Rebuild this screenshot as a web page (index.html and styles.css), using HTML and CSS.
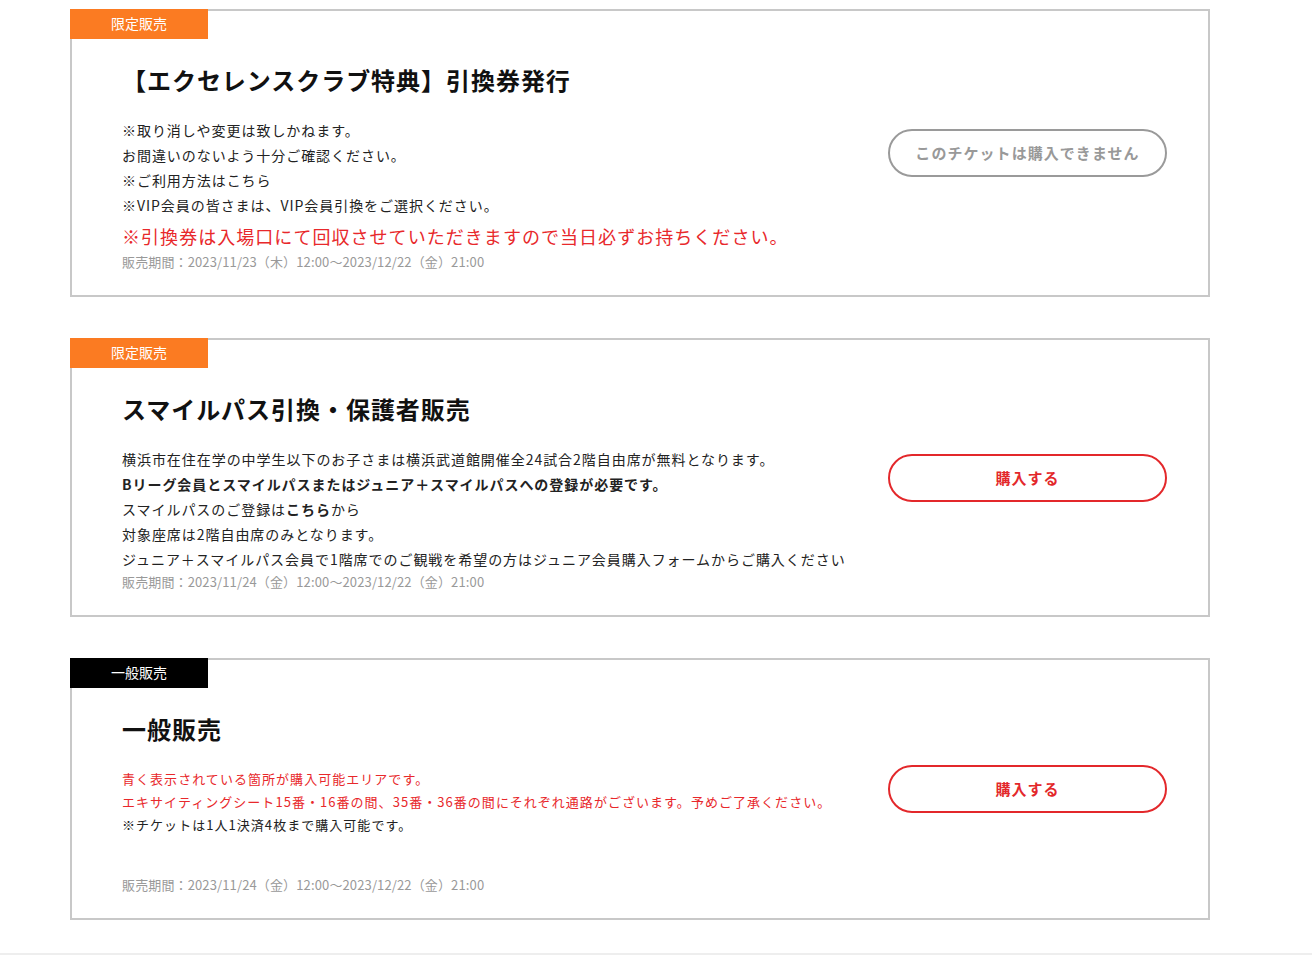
FILE: index.html
```html
<!DOCTYPE html>
<html lang="ja">
<head>
    <meta charset="UTF-8">
    <meta name="viewport" content="width=device-width, initial-scale=1.0">
    <title>チケット販売</title>
    <link rel="stylesheet" href="styles.css">
</head>

<body>
    <div class="ticket-list">
        <!-- 限定販売 -->
        <section class="ticket">
            <span class="ticket-badge badge-limited">限定販売</span>
            <div class="ticket-info">
                <h2 class="ticket-title">【エクセレンスクラブ特典】引換券発行</h2>
                <div class="ticket-note">
                    <p>※取り消しや変更は致しかねます。</p>
                    <p>お間違いのないよう十分ご確認ください。</p>
                    <p>※ご利用方法はこちら</p>
                    <p>※VIP会員の皆さまは、VIP会員引換をご選択ください。</p>
                    <p class="note-large">※引換券は入場口にて回収させていただきますので当日必ずお持ちください。</p>
                </div>
                <p class="ticket-period">販売期間：2023/11/23（木）12:00〜2023/12/22（金）21:00</p>
            </div>
            <div class="ticket-action">
                <a href="#" class="btn btn-disabled">このチケットは購入できません</a>
            </div>
        </section>

        <section class="ticket">
            <span class="ticket-badge badge-limited">限定販売</span>
            <div class="ticket-info">
                <h2 class="ticket-title">スマイルパス引換・保護者販売</h2>
                <div class="ticket-note">
                    <p>横浜市在住在学の中学生以下のお子さまは横浜武道館開催全24試合2階自由席が無料となります。</p>
                    <p><b>Bリーグ会員とスマイルパスまたはジュニア＋スマイルパスへの登録が必要です。</b></p>
                    <p>スマイルパスのご登録は<b>こちら</b>から</p>
                    <p>対象座席は2階自由席のみとなります。</p>
                    <p>ジュニア＋スマイルパス会員で1階席でのご観戦を希望の方はジュニア会員購入フォームからご購入ください</p>
                </div>
                <p class="ticket-period">販売期間：2023/11/24（金）12:00〜2023/12/22（金）21:00</p>
            </div>
            <div class="ticket-action">
                <a href="#" class="btn btn-buy">購入する</a>
            </div>
        </section>

        <!-- 一般販売 -->
        <section class="ticket">
            <span class="ticket-badge badge-general">一般販売</span>
            <div class="ticket-info">
                <h2 class="ticket-title">一般販売</h2>
                <div class="ticket-note note-small">
                    <p class="red">青く表示されている箇所が購入可能エリアです。</p>
                    <p class="red">エキサイティングシート15番・16番の間、35番・36番の間にそれぞれ通路がございます。予めご了承ください。</p>
                    <p>※チケットは1人1決済4枚まで購入可能です。</p>
                </div>
                <p class="ticket-period">販売期間：2023/11/24（金）12:00〜2023/12/22（金）21:00</p>
            </div>
            <div class="ticket-action">
                <a href="#" class="btn btn-buy">購入する</a>
            </div>
        </section>
    </div>
    <div class="footer-line"></div>
</body>

</html>
```

FILE: styles.css
```css
* {
    margin: 0;
    padding: 0;
    box-sizing: border-box;
}

body {
    font-family: "Noto Sans CJK JP", "Noto Sans", sans-serif;
    color: #222;
    background-color: #fff;
}

.ticket-list {
    width: 1140px;
    margin-left: 70px;
    padding-top: 9px;
}

.ticket {
    position: relative;
    display: flex;
    border: 2px solid #c8c8c8;
    padding: 51px 41px 24px 50px;
    margin-bottom: 41px;
}

.ticket:last-child {
    margin-bottom: 33px;
}

/* 左上のラベル */
.ticket-badge {
    position: absolute;
    top: -2px;
    left: -2px;
    width: 138px;
    height: 30px;
    line-height: 29px;
    text-align: center;
    font-size: 14px;
    color: #fff;
}

.badge-limited {
    background-color: #fb7b22;
}

.badge-general {
    background-color: #000;
}

.ticket-info {
    flex: 1;
}

.ticket-title {
    font-size: 24px;
    line-height: 36px;
    font-weight: 700;
    letter-spacing: 0.04em;
    color: #111;
    margin-bottom: 20px;
}

.ticket-note p {
    font-size: 14px;
    line-height: 25px;
    letter-spacing: 0.068em;
}

.ticket-note .note-large {
    font-size: 18px;
    line-height: 32px;
    margin-top: 2px;
    letter-spacing: 0.058em;
    color: #e8282b;
}

.note-small {
    margin-bottom: 39px;
}

.ticket-note.note-small p {
    font-size: 13px;
    line-height: 23px;
    letter-spacing: 0.08em;
}

.ticket-note .red {
    color: #e8282b;
}

.ticket-period {
    font-size: 13px;
    line-height: 19px;
    letter-spacing: 0.01em;
    color: #999;
}

/* ボタン（カードの高さの中央に置く） */
.ticket-action {
    display: flex;
    align-items: center;
    padding-bottom: 27px;
}

.btn {
    display: block;
    width: 279px;
    height: 48px;
    line-height: 44px;
    border: 2px solid;
    border-radius: 24px;
    text-align: center;
    text-decoration: none;
    font-size: 15px;
    font-weight: 700;
    letter-spacing: 0.07em;
}

.btn-disabled {
    border-color: #9a9a9a;
    color: #999;
}

.btn-buy {
    border-color: #e3282b;
    color: #e3282b;
}

.footer-line {
    border-top: 2px solid #eee;
}
```
